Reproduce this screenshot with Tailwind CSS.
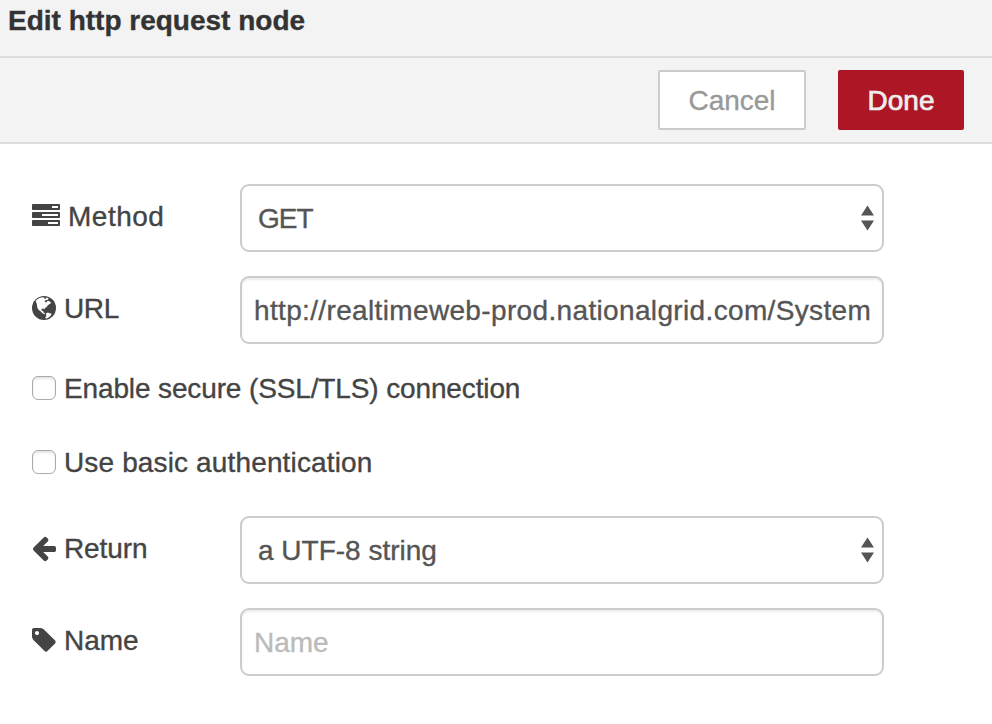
<!DOCTYPE html>
<html lang="en">
<head>
<meta charset="utf-8">
<title>Edit http request node</title>
<script src="https://cdn.jsdelivr.net/npm/@tailwindcss/browser@4"></script>
</head>
<body class="h-[724px] overflow-hidden bg-white font-['Liberation_Sans',Arial,sans-serif] text-[28px] leading-10 text-[#444] [-webkit-text-stroke:0.35px]">
<header class="h-[58px] border-b-2 border-[#ddd] bg-[#f3f3f3] pt-px pl-2">
  <h1 class="text-[28px] leading-10 font-bold text-[#333] whitespace-nowrap">Edit http request node</h1>
</header>
<div class="flex h-[86px] items-center justify-end gap-8 border-b-2 border-[#ddd] bg-[#f3f3f3] pr-7">
  <button class="h-[60px] w-[148px] rounded-[2px] border-2 border-[#ccc] bg-white pt-0.5 text-[#999]">Cancel</button>
  <button class="h-[60px] w-[126px] rounded-[2px] bg-[#ad1625] pt-0.5 text-[#eee] [-webkit-text-stroke:0.7px]">Done</button>
</div>
<form class="flex flex-col pt-10 pl-8">
  <div class="flex h-[68px] items-center">
    <label class="flex w-[208px] items-center gap-2 pb-1 whitespace-nowrap">
      <svg class="-mt-0.5 h-[22px] w-7 shrink-0" viewBox="0 128 1792 1408" fill="currentColor"><path d="M1024 1408h640v-128h-640v128zm-384-512h1024v-128h-1024v128zm640-512h384v-128h-384v128zm512 832v256q0 26-19 45t-45 19h-1664q-26 0-45-19t-19-45v-256q0-26 19-45t45-19h1664q26 0 45 19t19 45zm0-512v256q0 26-19 45t-45 19h-1664q-26 0-45-19t-19-45v-256q0-26 19-45t45-19h1664q26 0 45 19t19 45zm0-512v256q0 26-19 45t-45 19h-1664q-26 0-45-19t-19-45v-256q0-26 19-45t45-19h1664q26 0 45 19t19 45z"/></svg>
      <span class="pt-0.5 tracking-[0.5px]">Method</span>
    </label>
    <div class="flex h-[68px] w-[644px] items-center justify-between rounded-[9px] border-2 border-[#ccc] bg-white pr-2 pl-4 text-[#555]">
      <span class="pt-0.5 tracking-[-1px]">GET</span>
      <svg class="h-[26px] w-[13px]" viewBox="0 0 13 26" fill="currentColor"><path d="M6.5 0.5L13 10.5H0zM6.5 25.5L13 15.5H0z"/></svg>
    </div>
  </div>
  <div class="mt-6 flex h-[68px] items-center">
    <label class="flex w-[208px] items-center gap-2 pb-1 whitespace-nowrap">
      <svg class="size-6 shrink-0" viewBox="0 0 24 24">
        <circle cx="12" cy="12" r="12" fill="currentColor"/>
        <path fill="#fff" d="M3.6 4.4L7.4 2l3-.7 2.4.4-.8 1.500 1.700-.4.6-1.300 2.400.8-.9 1.400-2.400.6-.8 1.500 1.600.8 1.500-1.800 1.800.5 1.700 1.700-2 1.300-1.500 1.200-1.200 1.800-1.600.8-.3 1.400-1.200-.9-1.800.5.1 1.700 1.500.1.4 1.500 1.600 1.100-.5.7-2.300-1-1.900-1.900-1.800-1.200-1.400-2.700-.4-2.800-.7-2.300z"/>
        <path fill="#fff" d="M14.100 17.200l1.800-.7 1.700.8 1.900.3-.6 2-2.200 1.900-2.900 1.200-.4-1.200.9-1.700z"/>
      </svg>
      <span class="pt-0.5 tracking-[-0.4px]">URL</span>
    </label>
    <div class="flex h-[68px] w-[644px] items-center rounded-[9px] border-2 border-[#ccc] bg-white pl-3 text-[#555] shadow-[inset_0_2px_2px_rgba(0,0,0,0.075)]">
      <span class="pt-0.5 tracking-[0.35px] whitespace-nowrap">http://realtimeweb-prod.nationalgrid.com/System</span>
    </div>
  </div>
  <label class="mt-6 flex h-10 items-center gap-2 whitespace-nowrap">
    <span class="size-6 shrink-0 rounded-[6px] border border-[#aaa] bg-white shadow-[inset_0_2px_2px_rgba(0,0,0,0.1)]"></span>
    <span class="pt-0.5 tracking-[-0.13px]">Enable secure (SSL/TLS) connection</span>
  </label>
  <label class="mt-[34px] flex h-10 items-center gap-2 whitespace-nowrap">
    <span class="size-6 shrink-0 rounded-[6px] border border-[#aaa] bg-white shadow-[inset_0_2px_2px_rgba(0,0,0,0.1)]"></span>
    <span class="pt-0.5 tracking-[0.14px]">Use basic authentication</span>
  </label>
  <div class="mt-[34px] flex h-[68px] items-center">
    <label class="flex w-[208px] items-center gap-2 pb-1 whitespace-nowrap">
      <svg class="size-6 shrink-0 overflow-visible" viewBox="128 128 1536 1536" fill="currentColor"><path d="M1664 896v128q0 53-32.500 90.500t-84.500 37.500h-704l293 294q38 36 38 90t-38 90l-75 76q-37 37-90 37-52 0-91-37l-651-652q-37-37-37-90 0-52 37-91l651-650q38-38 91-38 52 0 90 38l75 74q38 38 38 91t-38 91l-293 293h704q52 0 84.500 37.500t32.500 90.500z"/></svg>
      <span class="pt-0.5 tracking-[-0.1px]">Return</span>
    </label>
    <div class="flex h-[68px] w-[644px] items-center justify-between rounded-[9px] border-2 border-[#ccc] bg-white pr-2 pl-4 text-[#555]">
      <span class="pt-0.5">a UTF-8 string</span>
      <svg class="h-[26px] w-[13px]" viewBox="0 0 13 26" fill="currentColor"><path d="M6.5 0.5L13 10.5H0zM6.5 25.5L13 15.5H0z"/></svg>
    </div>
  </div>
  <div class="mt-6 flex h-[68px] items-center">
    <label class="flex w-[208px] items-center gap-2 pb-1 whitespace-nowrap">
      <svg class="size-6 shrink-0" viewBox="128 128 1536 1536" fill="currentColor"><path d="M576 448q0-53-37.500-90.500t-90.500-37.500-90.500 37.500-37.500 90.500 37.500 90.500 90.500 37.500 90.500-37.500 37.500-90.500zm1067 576q0 53-37 90l-491 492q-39 37-91 37-53 0-90-37l-715-716q-38-37-64.500-101t-26.500-117v-416q0-52 38-90t90-38h416q53 0 117 26.500t102 64.500l715 714q37 39 37 91z"/></svg>
      <span class="pt-0.5">Name</span>
    </label>
    <div class="flex h-[68px] w-[644px] items-center rounded-[9px] border-2 border-[#ccc] bg-white px-3 text-[#bbb] shadow-[inset_0_2px_2px_rgba(0,0,0,0.075)]">
      <span class="pt-0.5">Name</span>
    </div>
  </div>
</form>
</body>
</html>
